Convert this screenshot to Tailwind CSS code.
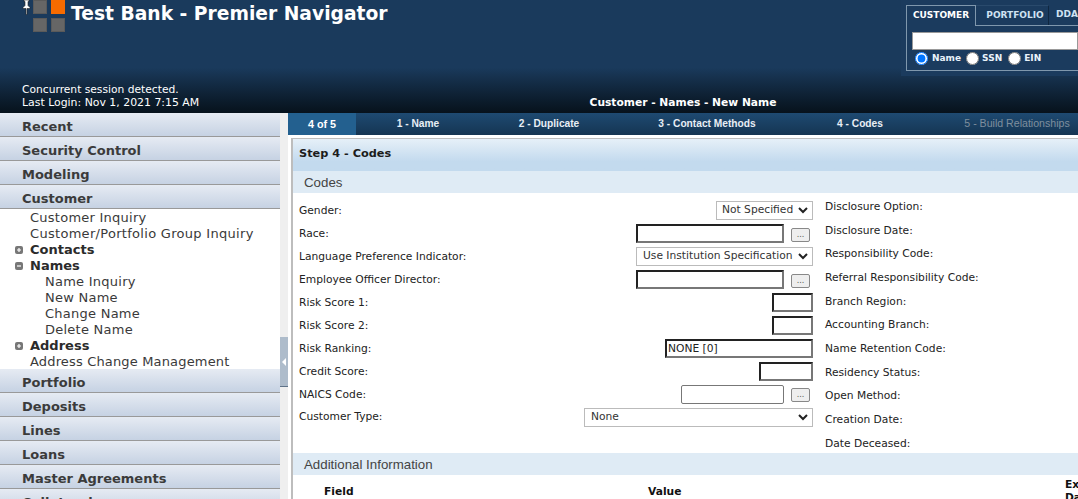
<!DOCTYPE html>
<html lang="en">
<head>
  <meta charset="UTF-8" />
  <title>Test Bank - Premier Navigator</title>
  <script src="https://cdn.jsdelivr.net/npm/@tailwindcss/browser@4"></script>
</head>
<body class="w-[1078px] h-[499px] overflow-hidden bg-white font-['DejaVu_Sans',sans-serif] text-[10.7px] text-[#222]">

  <!-- header -->
  <header class="h-[113px] flex flex-col bg-gradient-to-b from-[#1a3a5c] via-[#1a3a5c] via-60% to-[#07121c] text-white relative">
    <div class="flex justify-between h-[79px]">
      <div class="flex items-start pl-[21px]">
        <svg class="w-[11px] h-[15px]" viewBox="0 0 11 15">
          <path d="M3 0h5v1.500H7v4l2 2v1H6v6H5v-6H2v-1l2-2v-4H3z" fill="#fff" stroke="#222" stroke-width="0.6"/>
        </svg>
        <div class="grid grid-cols-[14px_14px] grid-rows-[14px_14px] gap-[4px] ml-[1px]">
          <div class="bg-[#666] border border-[#5a5a5a]"></div>
          <div class="bg-[#f76b00]"></div>
          <div class="bg-[#666] border border-[#5a5a5a]"></div>
          <div class="bg-[#666] border border-[#5a5a5a]"></div>
        </div>
        <h1 class="ml-[6px] mt-[1px] text-[18.7px] leading-[26px] font-bold whitespace-nowrap">Test Bank - Premier Navigator</h1>
      </div>

      <!-- search box -->
      <div class="w-[177px] h-[76px] bg-[#1b3b5e] pl-[5px] pt-[5px] overflow-hidden">
        <div class="flex h-[20px] font-bold text-[9px]">
          <div class="w-[72px] h-[21px] border border-b-0 border-[#7f97ad] bg-[#1b3b5e] flex items-center justify-center text-white relative z-10">CUSTOMER</div>
          <div class="w-[75px] pl-[6px] border-r border-[#0f2740] border-t border-t-[#2a4a6c] flex items-center justify-center text-[#cfe2f2]">PORTFOLIO</div>
          <div class="pl-[7px] flex items-center text-[#cfe2f2] whitespace-nowrap">DDA</div>
        </div>
        <div class="h-[46px] border border-r-0 border-[#7f97ad] pl-[5px] pt-[6px]">
          <div class="h-[18px] bg-white border border-[#999]"></div>
          <div class="flex items-center h-[17px] font-bold text-[9px] text-[#e8f2fa]">
            <input type="radio" name="q" checked class="w-[13px] h-[13px] m-0 ml-[3px] accent-[#0075ff]" />
            <span class="ml-[4px]">Name</span>
            <input type="radio" name="q" class="w-[13px] h-[13px] m-0 ml-[5px]" />
            <span class="ml-[3px]">SSN</span>
            <input type="radio" name="q" class="w-[13px] h-[13px] m-0 ml-[6px]" />
            <span class="ml-[3px]">EIN</span>
          </div>
        </div>
      </div>
    </div>
    <div class="flex flex-1">
      <div class="w-[288px] pl-[22px] leading-[13px] pt-[4px] whitespace-nowrap">
        <div>Concurrent session detected.</div>
        <div class="text-[10.9px]">Last Login: Nov 1, 2021 7:15 AM</div>
      </div>
      <div class="flex-1 text-center font-bold pt-[17px] leading-[13px]">Customer - Names - New Name</div>
    </div>
  </header>

  <div class="flex h-[386px] overflow-hidden">
    <!-- sidebar -->
    <aside class="w-[280px] shrink-0 overflow-hidden text-[13px] leading-[16px]">
      <div class="h-[24px] pl-[22px] pt-[5px] flex items-center font-bold text-[#3b3b3b] bg-gradient-to-b from-[#e6ebf3] to-[#c6d2e3] border-b border-[#999]">Recent</div>
      <div class="h-[24px] pl-[22px] pt-[5px] flex items-center font-bold text-[#3b3b3b] bg-gradient-to-b from-[#e6ebf3] to-[#c6d2e3] border-b border-[#999]">Security Control</div>
      <div class="h-[24px] pl-[22px] pt-[5px] flex items-center font-bold text-[#3b3b3b] bg-gradient-to-b from-[#e6ebf3] to-[#c6d2e3] border-b border-[#999]">Modeling</div>
      <div class="h-[24px] pl-[22px] pt-[5px] flex items-center font-bold text-[#3b3b3b] bg-gradient-to-b from-[#e6ebf3] to-[#c6d2e3] border-b border-[#999]">Customer</div>
      <ul class="pt-[1px] h-[160px] text-[#3a3a3a] tracking-[0.25px]">
        <li class="pl-[30px]">Customer Inquiry</li>
        <li class="pl-[30px] whitespace-nowrap tracking-[0.3px]">Customer/Portfolio Group Inquiry</li>
        <li class="pl-[15px] flex items-center font-bold text-[#2b2b2b] tracking-normal">
          <svg class="w-[8px] h-[8px] mr-[7px]" viewBox="0 0 8 8"><rect width="8" height="8" rx="2" fill="#777"/><path d="M2 4h4M4 2v4" stroke="#fff" stroke-width="1.200"/></svg>Contacts
        </li>
        <li class="pl-[15px] flex items-center font-bold text-[#2b2b2b] tracking-normal">
          <svg class="w-[8px] h-[8px] mr-[7px]" viewBox="0 0 8 8"><rect width="8" height="8" rx="2" fill="#777"/><path d="M2 4h4" stroke="#fff" stroke-width="1.200"/></svg>Names
        </li>
        <li class="pl-[45px]">Name Inquiry</li>
        <li class="pl-[45px]">New Name</li>
        <li class="pl-[45px]">Change Name</li>
        <li class="pl-[45px]">Delete Name</li>
        <li class="pl-[15px] flex items-center font-bold text-[#2b2b2b] tracking-normal">
          <svg class="w-[8px] h-[8px] mr-[7px]" viewBox="0 0 8 8"><rect width="8" height="8" rx="2" fill="#777"/><path d="M2 4h4M4 2v4" stroke="#fff" stroke-width="1.200"/></svg>Address
        </li>
        <li class="pl-[30px] whitespace-nowrap tracking-[0.16px]">Address Change Management</li>
      </ul>
      <div class="h-[24px] pl-[22px] pt-[5px] flex items-center font-bold text-[#3b3b3b] bg-gradient-to-b from-[#e6ebf3] to-[#c6d2e3] border-b border-[#999]">Portfolio</div>
      <div class="h-[24px] pl-[22px] pt-[5px] flex items-center font-bold text-[#3b3b3b] bg-gradient-to-b from-[#e6ebf3] to-[#c6d2e3] border-b border-[#999]">Deposits</div>
      <div class="h-[24px] pl-[22px] pt-[5px] flex items-center font-bold text-[#3b3b3b] bg-gradient-to-b from-[#e6ebf3] to-[#c6d2e3] border-b border-[#999]">Lines</div>
      <div class="h-[24px] pl-[22px] pt-[5px] flex items-center font-bold text-[#3b3b3b] bg-gradient-to-b from-[#e6ebf3] to-[#c6d2e3] border-b border-[#999]">Loans</div>
      <div class="h-[24px] pl-[22px] pt-[5px] flex items-center font-bold text-[#3b3b3b] bg-gradient-to-b from-[#e6ebf3] to-[#c6d2e3] border-b border-[#999]">Master Agreements</div>
      <div class="h-[24px] pl-[22px] pt-[5px] flex items-center font-bold text-[#3b3b3b] bg-gradient-to-b from-[#e6ebf3] to-[#c6d2e3] border-b border-[#999]">Collateral</div>
    </aside>

    <!-- splitter -->
    <div class="w-[8px] shrink-0 bg-[#efefef] relative">
      <div class="absolute left-0 top-[224px] w-[8px] h-[50px] bg-[#aebccb] border-b border-[#5f7388] flex items-center justify-center">
        <svg class="w-[4px] h-[8px]" viewBox="0 0 4 8"><path d="M4 0v8L0 4z" fill="#fff"/></svg>
      </div>
    </div>

    <main class="flex-1 min-w-0 overflow-hidden">
      <!-- wizard steps -->
      <nav class="flex h-[22px] bg-gradient-to-b from-[#1e4a72] to-[#153552] font-['Liberation_Sans',sans-serif] font-bold text-[10.200px] text-[#e8eef5] whitespace-nowrap">
        <div class="w-[68px] shrink-0 bg-[#23608f] flex items-center justify-center text-white text-[10.800px]">4 of 5</div>
        <div class="w-[124px] shrink-0 flex items-center justify-center">1 - Name</div>
        <div class="w-[138px] shrink-0 flex items-center justify-center">2 - Duplicate</div>
        <div class="w-[178px] shrink-0 flex items-center justify-center">3 - Contact Methods</div>
        <div class="w-[128px] shrink-0 flex items-center justify-center">4 - Codes</div>
        <div class="w-[186px] shrink-0 flex items-center justify-center font-normal text-[#7f8f9e] text-[10.600px]">5 - Build Relationships</div>
      </nav>

      <!-- step panel -->
      <section class="ml-[3px] mt-[3px] border-l-2 border-t border-[#bdbdbd] bg-white h-[361px]">
        <h2 class="h-[32px] pl-[6px] pb-[2px] flex items-center text-[11.300px] font-bold text-[#1c1c1c] bg-gradient-to-b from-[#e6f0f8] to-[#c3daee] to-70%">Step 4 - Codes</h2>
        <h3 class="h-[22px] pl-[11px] pt-[1px] flex items-center font-['Liberation_Sans',sans-serif] text-[13.300px] text-[#444] bg-[#dfebf5]">Codes</h3>

        <div class="flex h-[260px]">
          <!-- left column -->
          <div class="w-[520px] shrink-0 pl-[6px] pt-[6px]">
            <div class="flex items-center justify-between h-[23px]">
              <span class="pt-[2px]">Gender:</span>
              <div class="relative w-[97px] h-[19px] border border-[#bbb] text-[#333] pl-[5px] flex items-center">Not Specified
                <svg class="absolute right-[4px] top-[5px] w-[10px] h-[7px]" viewBox="0 0 10 7"><path d="M1 1l4 4 4-4" fill="none" stroke="#222" stroke-width="2"/></svg>
              </div>
            </div>
            <div class="flex items-center justify-between h-[23px]">
              <span class="pt-[2px]">Race:</span>
              <div class="flex items-center">
                <input class="w-[148px] h-[19px] border-2 border-t-[#222] border-l-[#222] border-r-[#777] border-b-[#777]" />
                <button class="ml-[7px] mr-[3px] mt-[2px] w-[19px] h-[14px] border border-[#888] rounded-[2px] bg-[#eee] text-[8px] leading-[12px] text-[#555]">...</button>
              </div>
            </div>
            <div class="flex items-center justify-between h-[23px]">
              <span class="pt-[2px]">Language Preference Indicator:</span>
              <div class="relative w-[177px] h-[19px] border border-[#bbb] text-[#333] pl-[6px] flex items-center whitespace-nowrap overflow-hidden">Use Institution Specification
                <svg class="absolute right-[4px] top-[5px] w-[10px] h-[7px]" viewBox="0 0 10 7"><path d="M1 1l4 4 4-4" fill="none" stroke="#222" stroke-width="2"/></svg>
              </div>
            </div>
            <div class="flex items-center justify-between h-[23px]">
              <span class="pt-[2px]">Employee Officer Director:</span>
              <div class="flex items-center">
                <input class="w-[148px] h-[19px] border-2 border-t-[#222] border-l-[#222] border-r-[#777] border-b-[#777]" />
                <button class="ml-[7px] mr-[3px] mt-[2px] w-[19px] h-[14px] border border-[#888] rounded-[2px] bg-[#eee] text-[8px] leading-[12px] text-[#555]">...</button>
              </div>
            </div>
            <div class="flex items-center justify-between h-[23px]">
              <span class="pt-[2px]">Risk Score 1:</span>
              <input class="w-[41px] h-[19px] border-2 border-t-[#222] border-l-[#222] border-r-[#777] border-b-[#777]" />
            </div>
            <div class="flex items-center justify-between h-[23px]">
              <span class="pt-[2px]">Risk Score 2:</span>
              <input class="w-[41px] h-[19px] border-2 border-t-[#222] border-l-[#222] border-r-[#777] border-b-[#777]" />
            </div>
            <div class="flex items-center justify-between h-[23px]">
              <span class="pt-[2px]">Risk Ranking:</span>
              <input value="NONE [0]" class="w-[148px] h-[19px] px-[1px] text-[#222] border-2 border-t-[#222] border-l-[#222] border-r-[#777] border-b-[#777]" />
            </div>
            <div class="flex items-center justify-between h-[23px]">
              <span class="pt-[2px]">Credit Score:</span>
              <input class="w-[54px] h-[19px] border-2 border-t-[#222] border-l-[#222] border-r-[#777] border-b-[#777]" />
            </div>
            <div class="flex items-center justify-between h-[23px]">
              <span class="pt-[2px]">NAICS Code:</span>
              <div class="flex items-center">
                <input class="w-[103px] h-[19px] border border-[#777] rounded-[2px]" />
                <button class="ml-[7px] mr-[3px] w-[19px] h-[14px] border border-[#888] rounded-[2px] bg-[#eee] text-[8px] leading-[12px] text-[#555]">...</button>
              </div>
            </div>
            <div class="flex items-center justify-between h-[22px]">
              <span>Customer Type:</span>
              <div class="relative w-[229px] h-[19px] border border-[#bbb] text-[#333] pl-[6px] flex items-center">None
                <svg class="absolute right-[4px] top-[5px] w-[10px] h-[7px]" viewBox="0 0 10 7"><path d="M1 1l4 4 4-4" fill="none" stroke="#222" stroke-width="2"/></svg>
              </div>
            </div>
          </div>

          <!-- right column -->
          <div class="pl-[12px] pt-[2px] whitespace-nowrap">
            <div class="h-[23.700px] flex items-center">Disclosure Option:</div>
            <div class="h-[23.700px] flex items-center">Disclosure Date:</div>
            <div class="h-[23.700px] flex items-center">Responsibility Code:</div>
            <div class="h-[23.700px] flex items-center">Referral Responsibility Code:</div>
            <div class="h-[23.700px] flex items-center">Branch Region:</div>
            <div class="h-[23.700px] flex items-center">Accounting Branch:</div>
            <div class="h-[23.700px] flex items-center">Name Retention Code:</div>
            <div class="h-[23.700px] flex items-center">Residency Status:</div>
            <div class="h-[23.700px] flex items-center">Open Method:</div>
            <div class="h-[23.700px] flex items-center">Creation Date:</div>
            <div class="h-[23.700px] flex items-center">Date Deceased:</div>
          </div>
        </div>

        <h3 class="h-[22px] pl-[11px] pt-[1px] flex items-center font-['Liberation_Sans',sans-serif] text-[13.300px] text-[#444] bg-[#dfebf5]">Additional Information</h3>
        <div class="flex font-bold text-[#111] leading-[13px]">
          <div class="w-[355px] pl-[31px] pt-[10px] shrink-0">Field</div>
          <div class="w-[417px] pt-[10px] shrink-0">Value</div>
          <div class="w-[20px] shrink-0 overflow-hidden pt-[3px]">Exp Date</div>
        </div>
      </section>
    </main>
  </div>
</body>
</html>
